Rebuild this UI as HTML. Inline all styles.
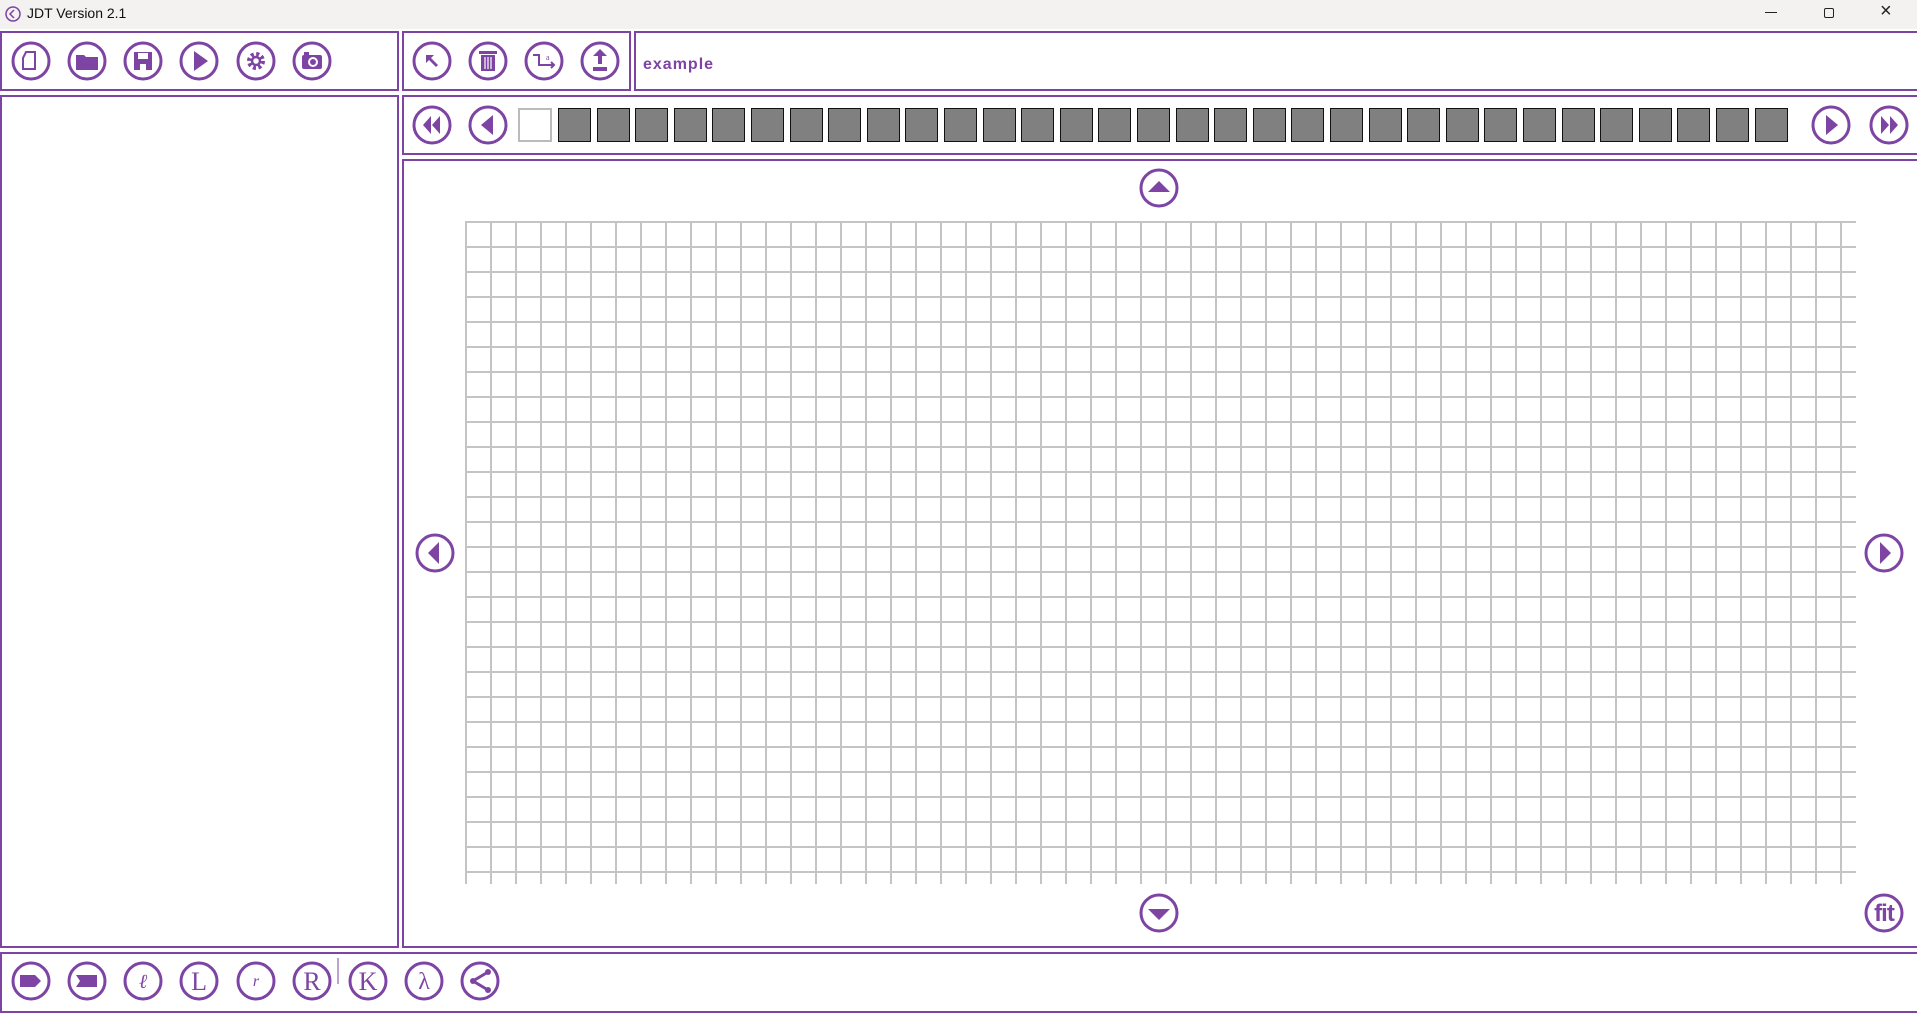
<!DOCTYPE html>
<html><head><meta charset="utf-8"><style>
*{margin:0;padding:0;box-sizing:border-box}
body{width:1917px;height:1018px;background:#fff;position:relative;overflow:hidden;font-family:"Liberation Sans",sans-serif}
.p{position:absolute;border:2px solid #7d44a3}
.t{position:absolute;left:0;top:0;width:1917px;height:29px;background:#f3f2f1}
.grid{position:absolute;left:465px;top:221px;width:1391px;height:663px;
background-image:linear-gradient(to right,#c4c4c4 2px,transparent 2px),linear-gradient(to bottom,#c4c4c4 2px,transparent 2px);background-size:25px 25px}
.sq{position:absolute;top:108px;width:33px;height:34px;background:#808080;border:1px solid #111}
svg.i{position:absolute}
</style></head><body>
<div class="t">
<svg style="position:absolute;left:4px;top:5px" width="18" height="18"><circle cx="9" cy="9" r="7" fill="none" stroke="#7d44a3" stroke-width="1.5"/><path d="M10 5L6 9L10 13" fill="none" stroke="#7d44a3" stroke-width="1.5"/></svg>
<div style="position:absolute;left:27px;top:5px;font-size:14px;color:#111">JDT Version 2.1</div>
<div style="position:absolute;left:1765px;top:12px;width:12px;height:1px;background:#222"></div>
<div style="position:absolute;left:1824px;top:8px;width:10px;height:10px;border:1px solid #222;border-radius:2px"></div>
<div style="position:absolute;left:1880px;top:0px;font-size:20px;color:#222">×</div>
</div>
<div class="p" style="left:0;top:31px;width:399px;height:60px"></div>
<div class="p" style="left:402px;top:31px;width:229px;height:60px"></div>
<div class="p" style="left:634px;top:31px;width:1290px;height:60px"></div>
<div style="position:absolute;left:643px;top:56px;font-size:16px;font-weight:bold;color:#7d44a3;letter-spacing:1px">example</div>
<div class="p" style="left:0;top:95px;width:399px;height:853px"></div>
<div class="p" style="left:402px;top:95px;width:1520px;height:60px"></div>
<div class="p" style="left:402px;top:159px;width:1520px;height:789px"></div>
<div class="p" style="left:0;top:952px;width:1925px;height:61px"></div>
<div class="grid"></div>
<div style="position:absolute;left:518px;top:108px;width:34px;height:34px;border:2px solid #bbb;background:#fff"></div>
<div id="fs"></div>
<svg width="1917" height="1018" style="position:absolute;left:0;top:0" font-family="Liberation Serif,serif">
<defs><g id="c"><circle r="18" fill="#fff" stroke="#7d44a3" stroke-width="3"/></g></defs>
<g fill="#7d44a3" stroke="#7d44a3">
<!-- top left -->
<g transform="translate(31,61)"><use href="#c"/><path d="M-5-9h9v17h-12v-11z" fill="none" stroke-width="2"/></g>
<g transform="translate(87,61)"><use href="#c"/><path d="M-11-6h8l2 2h12v13h-22z" stroke="none"/></g>
<g transform="translate(143,61)"><use href="#c"/><rect x="-9" y="-9" width="18" height="18" stroke="none"/><rect x="-5" y="-8" width="10" height="6" fill="#fff" stroke="none"/><rect x="-3" y="3" width="6" height="6" fill="#fff" stroke="none"/></g>
<g transform="translate(199,61)"><use href="#c"/><path d="M-5-10L9 0L-5 10z" stroke="none"/></g>
<g transform="translate(256,61)"><use href="#c"/><circle r="7" fill="none" stroke-width="4" stroke-dasharray="3 2.5"/><circle r="4" fill="none" stroke-width="2.5"/></g>
<g transform="translate(312,61)"><use href="#c"/><rect x="-10" y="-6" width="20" height="14" rx="2" stroke="none"/><rect x="-8" y="-9" width="5" height="4" stroke="none"/><circle cx="1" cy="1" r="4" fill="none" stroke="#fff" stroke-width="2"/></g>
<!-- top mid -->
<g transform="translate(432,61)"><use href="#c"/><path d="M-6-6h8l-3 3l7 7l-2 2l-7-7l-3 3z" stroke="none"/></g>
<g transform="translate(488,61)"><use href="#c"/><rect x="-7" y="-6" width="14" height="16" stroke="none"/><rect x="-9" y="-10" width="18" height="3" stroke="none"/><path d="M-3-4v12M0-4v12M3-4v12" stroke="#fff" stroke-width="1.2"/></g>
<g transform="translate(544,61)"><use href="#c"/><path d="M-11-6h6v10h15M7 1l3 3l-3 3" fill="none" stroke-width="2"/><text x="2" y="-1" font-size="8" stroke="none">a</text></g>
<g transform="translate(600,61)"><use href="#c"/><path d="M0-12l-7 7h5v8h4v-8h5z" stroke="none"/><rect x="-7" y="6" width="14" height="4" stroke="none"/></g>
<!-- nav -->
<g transform="translate(432,125)"><use href="#c"/><path d="M-1-9L-9 0L-1 9zM8-9L0 0L8 9z" stroke="none"/></g>
<g transform="translate(488,125)"><use href="#c"/><path d="M5-10L-7 0L5 10z" stroke="none"/></g>
<g transform="translate(1831,125)"><use href="#c"/><path d="M-5-10L7 0L-5 10z" stroke="none"/></g>
<g transform="translate(1889,125)"><use href="#c"/><path d="M-8-9L0 0L-8 9zM1-9L9 0L1 9z" stroke="none"/></g>
<!-- canvas -->
<g transform="translate(1159,188)"><use href="#c"/><path d="M-11 4L0-7L11 4z" stroke="none"/></g>
<g transform="translate(1159,913)"><use href="#c"/><path d="M-11-4L0 7L11-4z" stroke="none"/></g>
<g transform="translate(435,553)"><use href="#c"/><path d="M4-11L-7 0L4 11z" stroke="none"/></g>
<g transform="translate(1884,553)"><use href="#c"/><path d="M-4-11L7 0L-4 11z" stroke="none"/></g>
<g transform="translate(1884,913)"><use href="#c"/><text x="0" y="8" font-size="24" font-weight="bold" text-anchor="middle" stroke="none" font-family="Liberation Sans,sans-serif" letter-spacing="-1">fit</text></g>
<!-- bottom -->
<g transform="translate(31,981)"><use href="#c"/><path d="M-11-6h15l6 6l-6 6h-15z" stroke="none"/></g>
<g transform="translate(87,981)"><use href="#c"/><path d="M-11-6h21v12h-21l4-6z" stroke="none"/></g>
<g transform="translate(143,981)"><use href="#c"/><text x="0" y="7" font-size="20" font-style="italic" text-anchor="middle" stroke="none">ℓ</text></g>
<g transform="translate(199,981)"><use href="#c"/><text x="0" y="9" font-size="26" text-anchor="middle" stroke="none">L</text></g>
<g transform="translate(256,981)"><use href="#c"/><text x="0" y="5" font-size="16" font-style="italic" text-anchor="middle" stroke="none">r</text></g>
<g transform="translate(312,981)"><use href="#c"/><text x="0" y="9" font-size="26" text-anchor="middle" stroke="none">R</text></g>
<g transform="translate(368,981)"><use href="#c"/><text x="0" y="9" font-size="26" text-anchor="middle" stroke="none">K</text></g>
<g transform="translate(424,981)"><use href="#c"/><text x="0" y="8" font-size="24" text-anchor="middle" stroke="none">λ</text></g>
<g transform="translate(480,981)"><use href="#c"/><path d="M8-9L-7 0L8 9" fill="none" stroke-width="3"/><circle cx="8" cy="-9" r="3" stroke="none"/><circle cx="-7" cy="0" r="3" stroke="none"/><circle cx="8" cy="9" r="3" stroke="none"/></g>
</g>
<line x1="338" y1="958" x2="338" y2="984" stroke="#7d44a3" stroke-width="1"/>
</svg>
<script>
var h='';for(var i=0;i<32;i++){h+='<div class="sq" style="left:'+(558+i*38.6).toFixed(1)+'px"></div>';}
document.getElementById('fs').innerHTML=h;
</script>
</body></html>
